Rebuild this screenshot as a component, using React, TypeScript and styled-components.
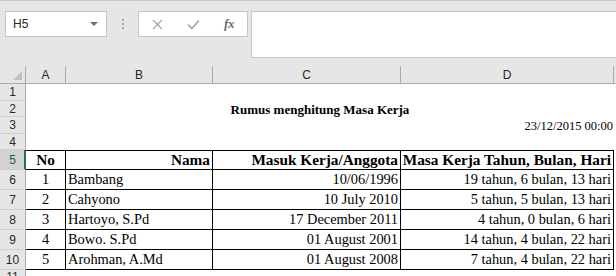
import React from "react";
import styled, { createGlobalStyle } from "styled-components";

const Global = createGlobalStyle`
  html, body { margin: 0; padding: 0; background: #e6e6e6; }
  #root { width: 616px; height: 276px; overflow: hidden; }
`;

const Frame = styled.div`
  width: 616px;
  height: 276px;
  overflow: hidden;
  display: flex;
  flex-direction: column;
  background: #e6e6e6;
  border-top: 1px solid #c8c8c8;
  box-sizing: border-box;
  font-family: "Liberation Sans", Arial, sans-serif;
`;

const FormulaBar = styled.div`
  height: 65px;
  flex: none;
  display: flex;
  align-items: flex-start;
  padding-top: 10px;
  box-sizing: border-box;
`;

const NameBox = styled.div`
  margin-left: 5px;
  width: 102px;
  height: 26px;
  box-sizing: border-box;
  background: #fff;
  border: 1px solid #c6c6c6;
  display: flex;
  align-items: center;
  justify-content: space-between;
  padding: 0 8px 0 7px;
  font-size: 12px;
  color: #262626;
`;

const Caret = styled.span`
  width: 0;
  height: 0;
  border-left: 4px solid transparent;
  border-right: 4px solid transparent;
  border-top: 4px solid #6f6f6f;
`;

const Grip = styled.div`
  width: 31px;
  height: 26px;
  display: flex;
  flex-direction: column;
  align-items: center;
  justify-content: center;
  gap: 2px;
`;

const GripDot = styled.span`
  width: 2px;
  height: 2px;
  background: #a8a8a8;
`;

const FxBox = styled.div`
  width: 110px;
  height: 26px;
  box-sizing: border-box;
  background: #fff;
  border: 1px solid #c6c6c6;
  display: flex;
  align-items: center;
  justify-content: flex-start;
`;

const IconSlot = styled.span`
  width: 36px;
  display: flex;
  justify-content: center;
  align-items: center;
`;

const FxText = styled.span`
  font-family: "Liberation Serif", "Times New Roman", serif;
  font-style: italic;
  font-weight: bold;
  font-size: 13px;
  color: #6a6a6a;
  letter-spacing: -0.5px;
`;

const FormulaInput = styled.div`
  margin-left: 3px;
  flex: 1;
  height: 47px;
  box-sizing: border-box;
  background: #fff;
  border: 1px solid #c6c6c6;
  border-right: none;
`;

const Sheet = styled.div`
  display: grid;
  grid-template-columns: 26px 40px 147px 188px 213px 1fr;
  grid-template-rows: 18px 17px 16px 17px 16px repeat(6, 20px) 1fr;
  flex: 1;
  background: #fff;
`;

const Corner = styled.div`
  background: #e6e6e6;
  border-right: 1px solid #ababab;
  border-bottom: 1px solid #ababab;
  box-sizing: border-box;
  position: relative;
  &::after {
    content: "";
    position: absolute;
    right: 3px;
    bottom: 3px;
    width: 0;
    height: 0;
    border-left: 9px solid transparent;
    border-bottom: 9px solid #c0c0c0;
  }
`;

const ColHead = styled.div<{ $last?: boolean }>`
  background: #e6e6e6;
  border-bottom: 1px solid #ababab;
  border-right: ${(p) => (p.$last ? "none" : "1px solid #ababab")};
  box-sizing: border-box;
  display: flex;
  align-items: center;
  justify-content: center;
  font-size: 12px;
  color: #262626;
  padding-top: 1px;
`;

const RowHead = styled.div<{ $active?: boolean }>`
  background: ${(p) => (p.$active ? "#d2d2d2" : "#e6e6e6")};
  border-right: ${(p) => (p.$active ? "2px solid #217346" : "1px solid #ababab")};
  border-bottom: 1px solid #d0d0d0;
  box-sizing: border-box;
  display: flex;
  align-items: center;
  justify-content: center;
  font-size: 12px;
  color: ${(p) => (p.$active ? "#1d5e3a" : "#262626")};
  padding-left: ${(p) => (p.$active ? "1px" : "0")};
`;

const Blank = styled.div<{ $span?: number }>`
  grid-column: span ${(p) => p.$span ?? 1};
  background: #fff;
`;

const TitleCell = styled.div`
  grid-column: span 4;
  display: flex;
  align-items: flex-end;
  justify-content: center;
  font-family: "Liberation Serif", "Times New Roman", serif;
  font-weight: bold;
  font-size: 13px;
  color: #000;
  line-height: 15px;
`;

const DateCell = styled.div`
  display: flex;
  align-items: flex-end;
  justify-content: flex-end;
  padding-right: 1px;
  font-family: "Liberation Serif", "Times New Roman", serif;
  font-size: 12.5px;
  color: #000;
  line-height: 15px;
`;

const Cell = styled.div<{ $align: "left" | "center" | "right"; $head?: boolean }>`
  box-sizing: border-box;
  border-right: 1px solid #000;
  border-bottom: 1px solid #000;
  border-top: ${(p) => (p.$head ? "1px solid #000" : "none")};
  display: flex;
  align-items: flex-end;
  justify-content: ${(p) =>
    p.$align === "left" ? "flex-start" : p.$align === "right" ? "flex-end" : "center"};
  padding: 0 2px 1px 2px;
  font-family: "Liberation Serif", "Times New Roman", serif;
  font-size: ${(p) => (p.$head ? "15.3px" : "14.4px")};
  font-weight: ${(p) => (p.$head ? "bold" : "normal")};
  line-height: 17px;
  color: #000;
  white-space: nowrap;
  overflow: hidden;
`;

const rows = [
  ["1", "Bambang", "10/06/1996", "19 tahun, 6 bulan, 13 hari"],
  ["2", "Cahyono", "10 July 2010", "5 tahun, 5 bulan, 13 hari"],
  ["3", "Hartoyo, S.Pd", "17 December 2011", "4 tahun, 0 bulan, 6 hari"],
  ["4", "Bowo. S.Pd", "01 August 2001", "14 tahun, 4 bulan, 22 hari"],
  ["5", "Arohman, A.Md", "01 August 2008", "7 tahun, 4 bulan, 22 hari"],
];

const CloseIcon = () => (
  <svg width="11" height="11" viewBox="0 0 11 11">
    <path d="M1 1 L10 10 M10 1 L1 10" stroke="#a6a6a6" strokeWidth="1.3" fill="none" />
  </svg>
);

const CheckIcon = () => (
  <svg width="13" height="11" viewBox="0 0 13 11">
    <path d="M1 5.5 L4.8 9.5 L12 1.5" stroke="#a6a6a6" strokeWidth="1.8" fill="none" />
  </svg>
);

export default function App() {
  return (
    <>
      <Global />
      <Frame>
        <FormulaBar>
          <NameBox>
            <span>H5</span>
            <Caret />
          </NameBox>
          <Grip>
            <GripDot />
            <GripDot />
            <GripDot />
          </Grip>
          <FxBox>
            <IconSlot>
              <CloseIcon />
            </IconSlot>
            <IconSlot>
              <CheckIcon />
            </IconSlot>
            <IconSlot>
              <FxText>fx</FxText>
            </IconSlot>
          </FxBox>
          <FormulaInput />
        </FormulaBar>
        <Sheet>
          <Corner />
          <ColHead>A</ColHead>
          <ColHead>B</ColHead>
          <ColHead>C</ColHead>
          <ColHead>D</ColHead>
          <ColHead $last />

          <RowHead>1</RowHead>
          <Blank $span={5} />

          <RowHead>2</RowHead>
          <TitleCell>Rumus menghitung Masa Kerja</TitleCell>
          <Blank />

          <RowHead>3</RowHead>
          <Blank $span={3} />
          <DateCell>23/12/2015 00:00</DateCell>
          <Blank />

          <RowHead>4</RowHead>
          <Blank $span={5} />

          <RowHead $active>5</RowHead>
          <Cell $align="center" $head>No</Cell>
          <Cell $align="right" $head>Nama</Cell>
          <Cell $align="right" $head>Masuk Kerja/Anggota</Cell>
          <Cell $align="right" $head>Masa Kerja Tahun, Bulan, Hari</Cell>
          <Blank />

          {rows.map((r, i) => (
            <React.Fragment key={i}>
              <RowHead>{i + 6}</RowHead>
              <Cell $align="center">{r[0]}</Cell>
              <Cell $align="left">{r[1]}</Cell>
              <Cell $align="right">{r[2]}</Cell>
              <Cell $align="right">{r[3]}</Cell>
              <Blank />
            </React.Fragment>
          ))}

          <RowHead>11</RowHead>
          <Blank $span={5} />
        </Sheet>
      </Frame>
    </>
  );
}
